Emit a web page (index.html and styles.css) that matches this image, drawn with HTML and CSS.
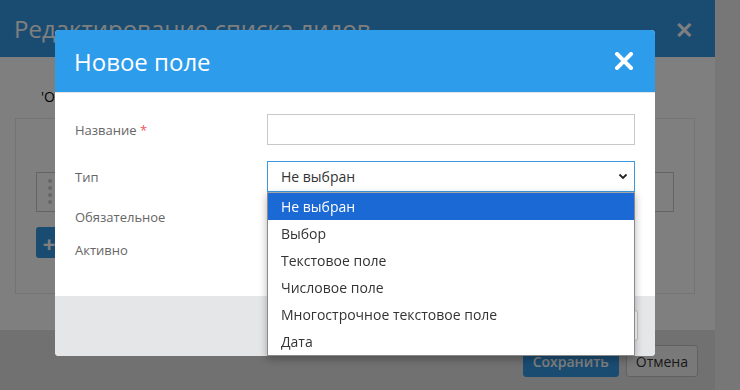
FILE: index.html
```html
<!DOCTYPE html>
<html lang="ru">
<head>
  <meta charset="UTF-8" />
  <title>Новое поле</title>
  <link rel="stylesheet" href="styles.css">
</head>
<body>

  <div class="lista">
    <div class="lista-head">
      <h2>Редактирование списка лидов</h2>
      <span class="lista-close">&#10005;</span>
    </div>
    <div class="lista-body">
      <div class="lista-tab">'Основное'</div>
      <div class="panel">
        <div class="campo-row">
          <span class="drag"><i></i><i></i><i></i><i></i><i></i><i></i><i></i><i></i></span>
        </div>
        <button class="btn-add">+</button>
      </div>
    </div>
    <div class="lista-foot">
      <button class="btn btn-primary">Сохранить</button>
      <button class="btn">Отмена</button>
    </div>
  </div>

  <div class="backdrop"></div>

  <div class="dialog">
    <div class="dialog-head">
      <h3>Новое поле</h3>
      <svg class="dialog-close" width="18" height="18" viewBox="0 0 18 18">
        <path d="M2 2L16 16M16 2L2 16" stroke="#fff" stroke-width="4" stroke-linecap="square"/>
      </svg>
    </div>

    <div class="dialog-body">
      <div class="fila">
        <label>Название <span class="req">*</span></label>
        <input type="text" class="control">
      </div>
      <div class="fila fila-tipo">
        <label>Тип</label>
        <div class="select-wrap">
          <div class="control select">
            <span>Не выбран</span>
            <svg width="10" height="7" viewBox="0 0 10 7">
              <path d="M1.5 1.5L5 5L8.5 1.5" fill="none" stroke="#222" stroke-width="1.8"/>
            </svg>
          </div>
          <ul class="opciones">
            <li class="activa">Не выбран</li>
            <li>Выбор</li>
            <li>Текстовое поле</li>
            <li>Числовое поле</li>
            <li>Многострочное текстовое поле</li>
            <li>Дата</li>
          </ul>
        </div>
      </div>
      <div class="fila fila-check">
        <label>Обязательное</label>
        <input type="checkbox">
      </div>
      <div class="fila fila-check2">
        <label>Активно</label>
        <input type="checkbox" checked>
      </div>
    </div>

    <div class="dialog-foot">
      <button class="btn btn-primary">Сохранить</button>
      <button class="btn">Отмена</button>
    </div>
  </div>

</body>
</html>
```

FILE: styles.css
```css
body {
  margin: 0;
  font-family: 'Open Sans', 'Liberation Sans', sans-serif;
  background: #eeeeee;
  color: #333;
  height: 390px;
  overflow: hidden;
}

button {
  font-family: inherit;
}

/* ventana de fondo */
.lista {
  width: 715px;
  background: #fff;
}

.lista-head {
  height: 57px;
  background: #3499e4;
  display: flex;
  align-items: center;
  justify-content: space-between;
  padding: 0 22px 0 14px;
}

.lista-head h2 {
  margin: 0;
  font-weight: normal;
  font-size: 24px;
  color: #fff;
  white-space: nowrap;
}

.lista-close {
  color: #fff;
  font-size: 22px;
  font-weight: bold;
}

.lista-body {
  height: 273px;
  padding: 0 20px 0 15px;
  box-sizing: border-box;
}

.lista-tab {
  height: 61px;
  box-sizing: border-box;
  padding: 30px 0 0 26px;
  line-height: 20px;
  font-size: 14px;
  color: #000;
}

.panel {
  height: 176px;
  box-sizing: border-box;
  border: 1px solid #e8e8e8;
  padding: 53px 20px 0;
}

.campo-row {
  height: 40px;
  box-sizing: border-box;
  border: 1px solid #c8c8c8;
  padding: 6px 0 0 11px;
}

.drag {
  display: grid;
  grid-template-columns: 4px 4px;
  gap: 3px 3px;
}

.drag i {
  width: 4px;
  height: 4px;
  border-radius: 50%;
  background: #ccc;
}

.btn-add {
  margin-top: 15px;
  width: 26px;
  height: 31px;
  padding: 0;
  border: none;
  border-radius: 3px;
  background: #3499e4;
  color: #fff;
  font-size: 22px;
  font-weight: bold;
  line-height: 1;
}

.lista-foot {
  height: 60px;
  background: #e3e3e3;
  display: flex;
  justify-content: flex-end;
  align-items: flex-start;
  gap: 7px;
  padding: 15px 17px 0 0;
  box-sizing: border-box;
}

.btn {
  height: 32px;
  padding: 0 9px;
  border: 1px solid #c2c2c2;
  border-radius: 3px;
  background: #f3f3f3;
  font-size: 14px;
  color: #333;
}

.btn-primary {
  background: #3499e4;
  border-color: #3499e4;
  color: #fff;
  font-weight: 600;
}

.backdrop {
  position: fixed;
  inset: 0;
  background: rgba(0, 0, 0, 0.5);
}

/* dialogo */
.dialog {
  position: absolute;
  left: 55px;
  top: 30px;
  width: 600px;
  background: #fff;
  border-radius: 4px;
}

.dialog-head {
  height: 62px;
  background: #2d9ceb;
  border-bottom: 1px solid #e5e5e5;
  border-radius: 4px 4px 0 0;
  display: flex;
  align-items: center;
  justify-content: space-between;
  padding: 0 22px 0 19px;
}

.dialog-head h3 {
  margin: 0;
  font-weight: normal;
  font-size: 24px;
  color: #fff;
}

.dialog-body {
  padding: 21px 20px 29px;
}

.fila {
  display: flex;
  align-items: center;
  height: 31px;
  margin-bottom: 16px;
}

.fila label {
  width: 192px;
  flex-shrink: 0;
  font-size: 13px;
  color: #666;
}

.req {
  color: #ee5555;
}

.fila-tipo {
  margin-bottom: 9px;
}

.fila-check {
  height: 32px;
  margin-bottom: 0;
}

.fila-check2 {
  height: 34px;
  margin-bottom: 0;
}

.control {
  flex: 1;
  height: 31px;
  box-sizing: border-box;
  border: 1px solid #c8c8c8;
  outline: none;
  font-family: inherit;
  font-size: 14px;
}

.select-wrap {
  flex: 1;
  position: relative;
}

.select {
  display: flex;
  align-items: center;
  justify-content: space-between;
  border-color: #3b99e0;
  padding: 0 6px 0 13px;
  color: #333;
}

.opciones {
  position: absolute;
  top: 100%;
  left: 0;
  right: 0;
  margin: 0;
  padding: 0;
  list-style: none;
  background: #fff;
  border: 1px solid #8a8a8a;
  border-top-color: #a5a5a5;
  box-shadow: 0 3px 8px rgba(0, 0, 0, 0.3);
  z-index: 5;
}

.opciones li {
  height: 27px;
  line-height: 27px;
  padding-left: 13px;
  font-size: 14px;
  color: #333;
}

.opciones li.activa {
  background: #1b69d4;
  color: #fff;
}

.dialog-foot {
  height: 60px;
  background: #e5e6e7;
  border-radius: 0 0 4px 4px;
  display: flex;
  justify-content: flex-end;
  align-items: flex-start;
  gap: 7px;
  padding: 14px 17px 0 0;
  box-sizing: border-box;
}

.dialog-foot .btn {
  background: #fff;
  height: 31px;
}
```
